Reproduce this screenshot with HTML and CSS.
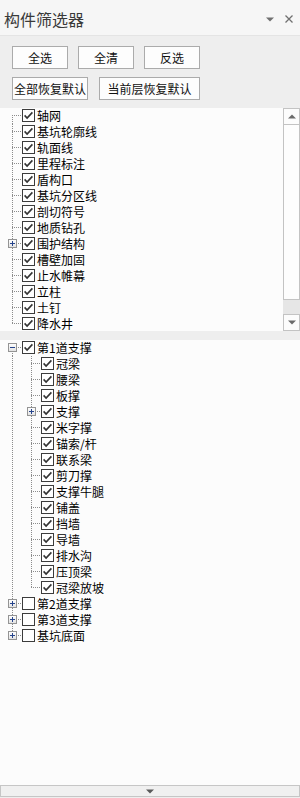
FILE: index.html
```html
<!DOCTYPE html>
<html lang="zh-CN">
<head>
<meta charset="utf-8">
<title>构件筛选器</title>
<link rel="stylesheet" href="styles.css">
</head>
<body>
<svg class="defs" width="0" height="0" aria-hidden="true">
  <symbol id="chk" viewBox="0 0 13 13">
    <rect x="0.5" y="0.5" width="12" height="12" fill="#fff" stroke="#3c3c3c"/>
    <polyline points="2.6,6.4 5.1,9 10.4,3.4" fill="none" stroke="#333" stroke-width="1.6"/>
  </symbol>
  <symbol id="unchk" viewBox="0 0 13 13">
    <rect x="0.5" y="0.5" width="12" height="12" fill="#fff" stroke="#3c3c3c"/>
  </symbol>
  <linearGradient id="eg" x1="0" y1="0" x2="0" y2="1">
    <stop offset="0" stop-color="#ffffff"/>
    <stop offset="1" stop-color="#e2e2e2"/>
  </linearGradient>
  <symbol id="plus" viewBox="0 0 9 9">
    <rect x="0.5" y="0.5" width="8" height="8" fill="url(#eg)" stroke="#949494"/>
    <path d="M2 4.5h5M4.5 2v5" stroke="#26448c" stroke-width="1"/>
  </symbol>
  <symbol id="minus" viewBox="0 0 9 9">
    <rect x="0.5" y="0.5" width="8" height="8" fill="url(#eg)" stroke="#949494"/>
    <path d="M2 4.5h5" stroke="#26448c" stroke-width="1"/>
  </symbol>
</svg>

<div class="titlebar">
  <span class="title">构件筛选器</span>
  <span class="tb-icons">
    <svg class="ico-drop" width="8" height="5" viewBox="0 0 8 5"><path d="M0 0.5h8L4 4.5z" fill="#707070"/></svg>
    <svg class="ico-close" width="8" height="8" viewBox="0 0 8 8"><path d="M0.5 0.5L7.5 7.5M7.5 0.5L0.5 7.5" stroke="#707070" stroke-width="1.3"/></svg>
  </span>
</div>

<div class="toolbar">
  <div class="btn-row">
    <button class="btn w56">全选</button>
    <button class="btn w56">全清</button>
    <button class="btn w56">反选</button>
  </div>
  <div class="btn-row row2">
    <button class="btn w76">全部恢复默认</button>
    <button class="btn w101">当前层恢复默认</button>
  </div>
</div>

<div class="top-panel">
  <div class="tree top-tree">
    <div class="row"><span class="g f"></span><svg class="cb"><use href="#chk"/></svg><span class="lbl">轴网</span></div>
    <div class="row"><span class="g t"></span><svg class="cb"><use href="#chk"/></svg><span class="lbl">基坑轮廓线</span></div>
    <div class="row"><span class="g t"></span><svg class="cb"><use href="#chk"/></svg><span class="lbl">轨面线</span></div>
    <div class="row"><span class="g t"></span><svg class="cb"><use href="#chk"/></svg><span class="lbl">里程标注</span></div>
    <div class="row"><span class="g t"></span><svg class="cb"><use href="#chk"/></svg><span class="lbl">盾构口</span></div>
    <div class="row"><span class="g t"></span><svg class="cb"><use href="#chk"/></svg><span class="lbl">基坑分区线</span></div>
    <div class="row"><span class="g t"></span><svg class="cb"><use href="#chk"/></svg><span class="lbl">剖切符号</span></div>
    <div class="row"><span class="g t"></span><svg class="cb"><use href="#chk"/></svg><span class="lbl">地质钻孔</span></div>
    <div class="row"><span class="g t"><svg class="exp"><use href="#plus"/></svg></span><svg class="cb"><use href="#chk"/></svg><span class="lbl">围护结构</span></div>
    <div class="row"><span class="g t"></span><svg class="cb"><use href="#chk"/></svg><span class="lbl">槽壁加固</span></div>
    <div class="row"><span class="g t"></span><svg class="cb"><use href="#chk"/></svg><span class="lbl">止水帷幕</span></div>
    <div class="row"><span class="g t"></span><svg class="cb"><use href="#chk"/></svg><span class="lbl">立柱</span></div>
    <div class="row"><span class="g t"></span><svg class="cb"><use href="#chk"/></svg><span class="lbl">土钉</span></div>
    <div class="row"><span class="g e"></span><svg class="cb"><use href="#chk"/></svg><span class="lbl">降水井</span></div>
  </div>
  <div class="vscroll">
    <div class="sb-btn"><svg width="8" height="5" viewBox="0 0 8 5"><path d="M0 4.5h8L4 0.5z" fill="#6a6a6a"/></svg></div>
    <div class="sb-thumb"></div>
    <div class="sb-track"></div>
    <div class="sb-btn"><svg width="8" height="5" viewBox="0 0 8 5"><path d="M0 0.5h8L4 4.5z" fill="#6a6a6a"/></svg></div>
  </div>
</div>

<div class="splitter"></div>

<div class="bottom-panel">
  <div class="tree">
    <div class="row"><span class="g f"><svg class="exp"><use href="#minus"/></svg></span><svg class="cb"><use href="#chk"/></svg><span class="lbl">第1道支撑</span></div>
    <div class="row"><span class="g v"></span><span class="g t"></span><svg class="cb"><use href="#chk"/></svg><span class="lbl">冠梁</span></div>
    <div class="row"><span class="g v"></span><span class="g t"></span><svg class="cb"><use href="#chk"/></svg><span class="lbl">腰梁</span></div>
    <div class="row"><span class="g v"></span><span class="g t"></span><svg class="cb"><use href="#chk"/></svg><span class="lbl">板撑</span></div>
    <div class="row"><span class="g v"></span><span class="g t"><svg class="exp"><use href="#plus"/></svg></span><svg class="cb"><use href="#chk"/></svg><span class="lbl">支撑</span></div>
    <div class="row"><span class="g v"></span><span class="g t"></span><svg class="cb"><use href="#chk"/></svg><span class="lbl">米字撑</span></div>
    <div class="row"><span class="g v"></span><span class="g t"></span><svg class="cb"><use href="#chk"/></svg><span class="lbl">锚索/杆</span></div>
    <div class="row"><span class="g v"></span><span class="g t"></span><svg class="cb"><use href="#chk"/></svg><span class="lbl">联系梁</span></div>
    <div class="row"><span class="g v"></span><span class="g t"></span><svg class="cb"><use href="#chk"/></svg><span class="lbl">剪刀撑</span></div>
    <div class="row"><span class="g v"></span><span class="g t"></span><svg class="cb"><use href="#chk"/></svg><span class="lbl">支撑牛腿</span></div>
    <div class="row"><span class="g v"></span><span class="g t"></span><svg class="cb"><use href="#chk"/></svg><span class="lbl">铺盖</span></div>
    <div class="row"><span class="g v"></span><span class="g t"></span><svg class="cb"><use href="#chk"/></svg><span class="lbl">挡墙</span></div>
    <div class="row"><span class="g v"></span><span class="g t"></span><svg class="cb"><use href="#chk"/></svg><span class="lbl">导墙</span></div>
    <div class="row"><span class="g v"></span><span class="g t"></span><svg class="cb"><use href="#chk"/></svg><span class="lbl">排水沟</span></div>
    <div class="row"><span class="g v"></span><span class="g t"></span><svg class="cb"><use href="#chk"/></svg><span class="lbl">压顶梁</span></div>
    <div class="row"><span class="g v"></span><span class="g e"></span><svg class="cb"><use href="#chk"/></svg><span class="lbl">冠梁放坡</span></div>
    <div class="row"><span class="g t"><svg class="exp"><use href="#plus"/></svg></span><svg class="cb"><use href="#unchk"/></svg><span class="lbl">第2道支撑</span></div>
    <div class="row"><span class="g t"><svg class="exp"><use href="#plus"/></svg></span><svg class="cb"><use href="#unchk"/></svg><span class="lbl">第3道支撑</span></div>
    <div class="row"><span class="g e"><svg class="exp"><use href="#plus"/></svg></span><svg class="cb"><use href="#unchk"/></svg><span class="lbl">基坑底面</span></div>
  </div>
</div>

<div class="bottom-scroll">
  <svg width="8" height="5" viewBox="0 0 8 5"><path d="M0 0.5h8L4 4.5z" fill="#5a5a5a"/></svg>
</div>
</body>
</html>
```

FILE: styles.css
```css
* { box-sizing: border-box; }

html, body {
  margin: 0;
  padding: 0;
}

body {
  width: 300px;
  height: 798px;
  overflow: hidden;
  background: #eeeeee;
  font-family: "Noto Sans CJK SC", "Noto Sans", sans-serif;
  color: #000;
}

.defs {
  display: block;
  width: 0;
  height: 0;
  overflow: hidden;
}

/* title bar */
.titlebar {
  height: 36px;
  display: flex;
  align-items: center;
  padding-left: 4px;
  padding-right: 7px;
  background: #f6f6f6;
  border-bottom: 1px solid #e4e4e4;
}

.title {
  font-size: 16px;
  line-height: 20px;
  color: #3a3a3a;
  margin-top: 3px;
}

.tb-icons {
  margin-left: auto;
  display: flex;
  align-items: center;
  gap: 11px;
  margin-top: 3px;
}

.ico-drop { display: block; margin-top: 1px; }
.ico-close { display: block; }

/* toolbar */
.toolbar {
  height: 72px;
  padding: 10px 12px 0 12px;
  display: flex;
  flex-direction: column;
  gap: 8px;
}

.btn-row {
  display: flex;
  gap: 10px;
}

.btn-row.row2 { gap: 11px; }

.btn {
  height: 23px;
  padding: 0;
  margin: 0;
  border: 1px solid #ababab;
  background: #fdfdfd;
  font-family: "Noto Sans CJK SC", "Noto Sans", sans-serif;
  font-size: 12px;
  line-height: 20px;
  color: #111;
}

.w56 { width: 56px; }
.w76 { width: 76px; }
.w101 { width: 101px; }

/* top panel */
.top-panel {
  height: 223px;
  display: flex;
  background: #fcfcfc;
}

.tree {
  flex: 1;
  overflow: hidden;
  display: flex;
  flex-direction: column;
}

.top-tree { padding-top: 0; }

.vscroll {
  width: 17px;
  flex: none;
  display: flex;
  flex-direction: column;
  background: #e8e8e8;
}

.sb-btn {
  height: 17px;
  border: 1px solid #c3c3c3;
  background: #fcfcfc;
  display: flex;
  align-items: center;
  justify-content: center;
}

.sb-thumb {
  height: 175px;
  border: 1px solid #c3c3c3;
  border-top: none;
  background: #fdfdfd;
}

.sb-track {
  flex: 1;
  background: #e6e6e6;
}

.splitter {
  height: 9px;
  background: #eeeeee;
}

/* bottom panel */
.bottom-panel {
  height: 445px;
  background: #fcfcfc;
  display: flex;
}

.bottom-scroll {
  height: 12px;
  border: 1px solid #c6c6c6;
  background: #f0f0f0;
  display: flex;
  align-items: center;
  justify-content: center;
}

.bottom-scroll svg { display: block; }

/* tree rows */
.row {
  height: 16px;
  flex: none;
  display: flex;
  align-items: flex-start;
  padding-left: 3px;
}

.g {
  width: 19px;
  height: 16px;
  flex: none;
  display: flex;
  align-items: flex-start;
}

.g.v {
  background: repeating-linear-gradient(to bottom, #8c8c8c 0 1px, transparent 1px 2px) 9px 0 / 1px 16px no-repeat;
}

.g.t {
  background:
    repeating-linear-gradient(to bottom, #8c8c8c 0 1px, transparent 1px 2px) 9px 0 / 1px 16px no-repeat,
    repeating-linear-gradient(to right, #8c8c8c 0 1px, transparent 1px 2px) 9px 7px / 10px 1px no-repeat;
}

.g.f {
  background:
    repeating-linear-gradient(to bottom, #8c8c8c 0 1px, transparent 1px 2px) 9px 7px / 1px 9px no-repeat,
    repeating-linear-gradient(to right, #8c8c8c 0 1px, transparent 1px 2px) 9px 7px / 10px 1px no-repeat;
}

.g.e {
  background:
    repeating-linear-gradient(to bottom, #8c8c8c 0 1px, transparent 1px 2px) 9px 0 / 1px 8px no-repeat,
    repeating-linear-gradient(to right, #8c8c8c 0 1px, transparent 1px 2px) 9px 7px / 10px 1px no-repeat;
}

.exp {
  display: block;
  width: 9px;
  height: 9px;
  margin-left: 5px;
  margin-top: 3px;
}

.cb {
  display: block;
  width: 13px;
  height: 13px;
  flex: none;
  margin-top: 1px;
}

.lbl {
  margin-left: 2px;
  margin-top: 1px;
  font-size: 12px;
  line-height: 13px;
  color: #000;
  white-space: nowrap;
}
```
